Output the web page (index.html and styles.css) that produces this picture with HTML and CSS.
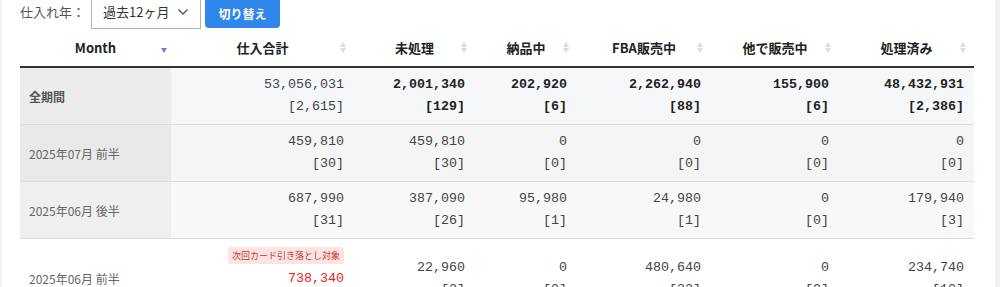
FILE: index.html
```html
<!DOCTYPE html>
<html lang="ja">
<head>
<meta charset="utf-8">
<link rel="stylesheet" href="styles.css">
</head>
<body>
<div class="page">
  <div class="controls">
    <span class="label">仕入れ年：</span>
    <div class="select">
      <span>過去12ヶ月</span>
      <svg class="chev" width="12" height="8" viewBox="0 0 12 8"><path d="M1.5 1.5 L6 6 L10.5 1.5" fill="none" stroke="#555" stroke-width="1.4"/></svg>
    </div>
    <button class="btn">切り替え</button>
  </div>
  <table class="tbl">
    <colgroup>
      <col style="width:151px"><col style="width:183px"><col style="width:121px"><col style="width:102px"><col style="width:134px"><col style="width:128px"><col style="width:135px">
    </colgroup>
    <thead>
      <tr>
        <th>Month<span class="sort-desc"></span></th>
        <th>仕入合計<span class="sort"></span></th>
        <th>未処理<span class="sort"></span></th>
        <th>納品中<span class="sort"></span></th>
        <th>FBA販売中<span class="sort"></span></th>
        <th>他で販売中<span class="sort"></span></th>
        <th>処理済み<span class="sort"></span></th>
      </tr>
    </thead>
    <tbody>
      <tr class="r1">
        <td class="m strong">全期間</td>
        <td class="n">53,056,031<br>[2,615]</td>
        <td class="n b">2,001,340<br>[129]</td>
        <td class="n b">202,920<br>[6]</td>
        <td class="n b">2,262,940<br>[88]</td>
        <td class="n b">155,900<br>[6]</td>
        <td class="n b">48,432,931<br>[2,386]</td>
      </tr>
      <tr class="r2">
        <td class="m">2025年07月 前半</td>
        <td class="n">459,810<br>[30]</td>
        <td class="n">459,810<br>[30]</td>
        <td class="n">0<br>[0]</td>
        <td class="n">0<br>[0]</td>
        <td class="n">0<br>[0]</td>
        <td class="n">0<br>[0]</td>
      </tr>
      <tr class="r3">
        <td class="m">2025年06月 後半</td>
        <td class="n">687,990<br>[31]</td>
        <td class="n">387,090<br>[26]</td>
        <td class="n">95,980<br>[1]</td>
        <td class="n">24,980<br>[1]</td>
        <td class="n">0<br>[0]</td>
        <td class="n">179,940<br>[3]</td>
      </tr>
      <tr class="r4">
        <td class="m">2025年06月 前半</td>
        <td class="n"><span class="badge">次回カード引き落とし対象</span><br><span class="red">738,340</span><br>[30]</td>
        <td class="n">22,960<br>[2]</td>
        <td class="n">0<br>[0]</td>
        <td class="n">480,640<br>[22]</td>
        <td class="n">0<br>[0]</td>
        <td class="n">234,740<br>[10]</td>
      </tr>
    </tbody>
  </table>
</div>
</body>
</html>
```

FILE: styles.css
```css
html, body {
  margin: 0;
  padding: 0;
  background: #f1f1f1;
  overflow: hidden;
}
body {
  font-family: "Noto Sans CJK JP", "Noto Sans", sans-serif;
  color: #333;
}
.page {
  background: #fff;
  margin: 0 5px 0 2px;
  padding: 0 0 40px 18px;
  min-height: 287px;
}
.controls {
  display: flex;
  align-items: center;
  height: 37px;
  margin-top: -8px;
}
.label {
  font-size: 13px;
  color: #555;
  width: 71px;
  padding-top: 2px;
}
.select {
  box-sizing: border-box;
  width: 110px;
  height: 37px;
  border: 1px solid #b5b5b5;
  display: flex;
  align-items: center;
  justify-content: space-between;
  padding: 2px 11px 0 11px;
  font-size: 13px;
  color: #333;
}
.chev { margin-top: 1px; }
.btn {
  margin-left: 4px;
  box-sizing: border-box;
  width: 75px;
  height: 36px;
  margin-top: -1px;
  border: none;
  border-radius: 0 0 4px 4px;
  background: #2f86eb;
  color: #fff;
  font-family: "Noto Sans CJK JP", sans-serif;
  font-weight: bold;
  font-size: 12px;
  padding: 6px 0 0;
}
.tbl {
  margin-top: 1px;
  table-layout: fixed;
  width: 954px;
  border-collapse: collapse;
}
.tbl th {
  position: relative;
  height: 35px;
  padding: 0 0 1px;
  font-size: 13px;
  font-weight: bold;
  color: #222;
  text-align: center;
  border-bottom: 2px solid #333;
}
.sort {
  position: absolute;
  right: 6px;
  top: 12px;
  width: 8px;
  height: 11px;
}
.sort::before, .sort::after {
  content: "";
  position: absolute;
  left: 0;
  border-left: 3.5px solid transparent;
  border-right: 3.5px solid transparent;
}
.sort::before {
  top: 0;
  border-bottom: 5px solid #dddddd;
}
.sort::after {
  top: 6px;
  border-top: 5px solid #dddddd;
}
.sort-desc {
  position: absolute;
  right: 4px;
  top: 18px;
  border-left: 3.5px solid transparent;
  border-right: 3.5px solid transparent;
  border-top: 5px solid #7379d8;
}
.tbl td {
  border-bottom: 1px solid #dcdcdc;
  padding: 6px 10px 6px 9px;
  vertical-align: middle;
}
.tbl td.m {
  font-size: 12px;
  color: #666;
}
.tbl td.m.strong {
  font-weight: bold;
  color: #555;
}
.tbl td.n {
  font-family: "Liberation Mono", monospace;
  font-size: 13.33px;
  line-height: 22px;
  text-align: right;
  color: #444;
}
.tbl td.n.b { font-weight: bold; color: #222; }
.r1 td { background: #f6f7f9; }
.r1 td.m { background: #ececec; }
.r2 td { background: #f5f5f5; }
.r2 td.m { background: #e9e9e9; }
.r3 td { background: #f8f8f8; }
.r3 td.m { background: #efefef; }
.r4 td { background: #fff; }
.badge {
  display: inline-block;
  font-family: "Noto Sans CJK JP", sans-serif;
  font-size: 9px;
  line-height: 17px;
  padding: 0 4px;
  margin: 2px 0 4px;
  background: #fde3e3;
  color: #c0392b;
  border-radius: 3px;
}
.red { color: #ee1c25; }
```
